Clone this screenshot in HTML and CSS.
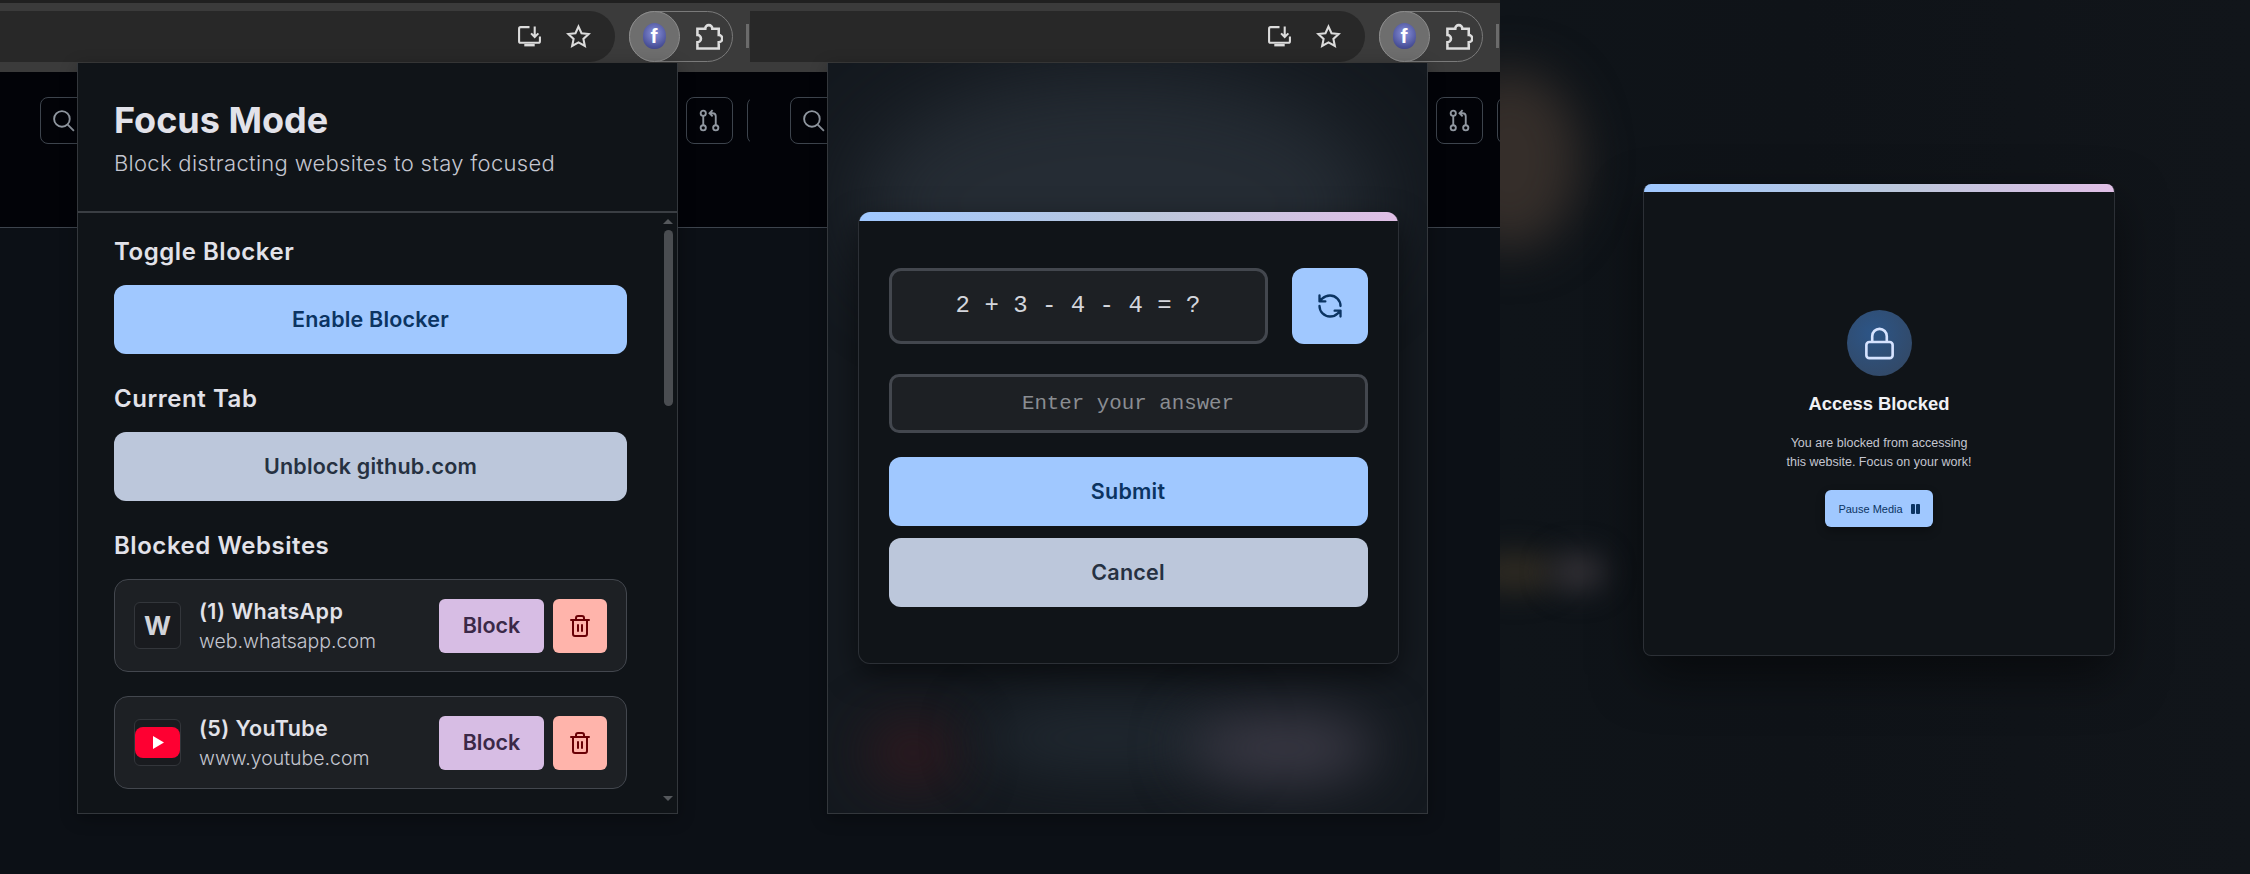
FILE: index.html
```html
<!DOCTYPE html>
<html lang="en">
<head>
  <meta charset="UTF-8">
  <meta name="viewport" content="width=device-width, initial-scale=1.0">
  <title>Focus Mode</title>
  <link rel="stylesheet" href="styles.css">
</head>
<body>

<div class="page">

  <!-- first shot: extension popup -->
  <section class="shot">
    <div class="toolbar">
      <div class="url-pill">
        <svg class="tool-icon" viewBox="0 0 24 24"><path d="M12 3H3.500a1.500 1.500 0 0 0-1.500 1.500v12a1.500 1.500 0 0 0 1.500 1.500h17a1.500 1.500 0 0 0 1.500-1.500V12"/><path class="stand" d="M7 19.200h10v2.300H7z"/><path d="M17 2.500v10M13.500 9l3.500 3.500L20.500 9"/></svg>
        <svg class="tool-icon" viewBox="0 0 24 24"><path d="M12 2.500l2.900 6.300 6.900.8-5.100 4.700 1.400 6.800-6.100-3.400-6.100 3.400 1.400-6.800-5.100-4.700 6.900-.8z"/></svg>
      </div>
      <div class="ext-pill">
        <div class="ext-active"><div class="ext-logo">f</div></div>
        <svg class="tool-icon puzzle" viewBox="2 3 19 19"><path d="M3 7h5.500a2.500 2.500 0 0 1 5 0H18v4.500a2.500 2.500 0 0 1 0 5V21H3v-4.500a2.500 2.500 0 0 0 0-5z"/></svg>
      </div>
      <div class="tool-divider"></div>
    </div>
    <div class="repo-bar">
      <div class="repo-btn search-btn">
        <svg viewBox="0 0 24 24"><circle cx="10.500" cy="10.500" r="7.500"/><path d="M16 16l6 6"/></svg>
      </div>
      <div class="repo-btn pr-btn">
        <svg viewBox="0 0 24 24"><circle cx="6" cy="5" r="2.500"/><circle cx="6" cy="19" r="2.500"/><circle cx="18" cy="19" r="2.500"/><path d="M6 7.500v9M18 16.500V8a3 3 0 0 0-3-3h-3M15 2l-3 3 3 3"/></svg>
      </div>
      <div class="repo-btn cut-btn"></div>
    </div>

    <div class="popup">
      <header class="popup-head">
        <h1>Focus Mode</h1>
        <p>Block distracting websites to stay focused</p>
      </header>
      <div class="popup-body">
        <div class="popup-content">
          <h2>Toggle Blocker</h2>
          <button class="btn btn-primary">Enable Blocker</button>
          <h2>Current Tab</h2>
          <button class="btn btn-secondary">Unblock github.com</button>
          <h2>Blocked Websites</h2>

          <div class="site">
            <div class="site-icon">W</div>
            <div class="site-text">
              <div class="site-name">(1) WhatsApp</div>
              <div class="site-url">web.whatsapp.com</div>
            </div>
            <button class="block-btn">Block</button>
            <button class="trash-btn">
              <svg viewBox="0 0 24 24"><path d="M3 6h18M19 6v14c0 1-1 2-2 2H7c-1 0-2-1-2-2V6M8 6V4c0-1 1-2 2-2h4c1 0 2 1 2 2v2M10 11v6M14 11v6"/></svg>
            </button>
          </div>

          <div class="site">
            <div class="site-icon">
              <svg viewBox="0 0 45 31"><rect width="45" height="31" rx="8" fill="#fe0032"/><path d="M18 9l11 6.500-11 6.500z" fill="#fff"/></svg>
            </div>
            <div class="site-text">
              <div class="site-name">(5) YouTube</div>
              <div class="site-url">www.youtube.com</div>
            </div>
            <button class="block-btn">Block</button>
            <button class="trash-btn">
              <svg viewBox="0 0 24 24"><path d="M3 6h18M19 6v14c0 1-1 2-2 2H7c-1 0-2-1-2-2V6M8 6V4c0-1 1-2 2-2h4c1 0 2 1 2 2v2M10 11v6M14 11v6"/></svg>
            </button>
          </div>
        </div>
        <div class="scrollbar">
          <div class="arrow-up"></div>
          <div class="thumb"></div>
          <div class="arrow-down"></div>
        </div>
      </div>
    </div>
  </section>

  <!-- second shot: math challenge -->
  <section class="shot">
    <div class="toolbar">
      <div class="url-pill">
        <svg class="tool-icon" viewBox="0 0 24 24"><path d="M12 3H3.500a1.500 1.500 0 0 0-1.500 1.500v12a1.500 1.500 0 0 0 1.500 1.500h17a1.500 1.500 0 0 0 1.500-1.500V12"/><path class="stand" d="M7 19.200h10v2.300H7z"/><path d="M17 2.500v10M13.500 9l3.500 3.500L20.500 9"/></svg>
        <svg class="tool-icon" viewBox="0 0 24 24"><path d="M12 2.500l2.900 6.300 6.900.8-5.100 4.700 1.400 6.800-6.100-3.400-6.100 3.400 1.400-6.800-5.100-4.700 6.900-.8z"/></svg>
      </div>
      <div class="ext-pill">
        <div class="ext-active"><div class="ext-logo">f</div></div>
        <svg class="tool-icon puzzle" viewBox="2 3 19 19"><path d="M3 7h5.500a2.500 2.500 0 0 1 5 0H18v4.500a2.500 2.500 0 0 1 0 5V21H3v-4.500a2.500 2.500 0 0 0 0-5z"/></svg>
      </div>
      <div class="tool-divider"></div>
    </div>
    <div class="repo-bar">
      <div class="repo-btn search-btn">
        <svg viewBox="0 0 24 24"><circle cx="10.500" cy="10.500" r="7.500"/><path d="M16 16l6 6"/></svg>
      </div>
      <div class="repo-btn pr-btn">
        <svg viewBox="0 0 24 24"><circle cx="6" cy="5" r="2.500"/><circle cx="6" cy="19" r="2.500"/><circle cx="18" cy="19" r="2.500"/><path d="M6 7.500v9M18 16.500V8a3 3 0 0 0-3-3h-3M15 2l-3 3 3 3"/></svg>
      </div>
      <div class="repo-btn cut-btn"></div>
    </div>

    <div class="popup popup-blur">
      <div class="blob blob-top"></div>
      <div class="blob blob-red"></div>
      <div class="blob blob-mid"></div>
      <div class="blob blob-grey"></div>
      <div class="modal">
        <div class="rainbow"></div>
        <div class="modal-body">
          <div class="captcha-row">
            <div class="captcha">2 + 3 - 4 - 4 = ?</div>
            <button class="refresh-btn">
              <svg viewBox="0 0 24 24"><path d="M21 12a9 9 0 0 0-9-9 9.750 9.750 0 0 0-6.740 2.740L3 8M3 3v5h5M3 12a9 9 0 0 0 9 9 9.750 9.750 0 0 0 6.740-2.740L21 16M16 16h5v5"/></svg>
            </button>
          </div>
          <input class="answer" type="text" placeholder="Enter your answer">
          <button class="btn btn-primary">Submit</button>
          <button class="btn btn-secondary">Cancel</button>
        </div>
      </div>
    </div>
  </section>

  <!-- third shot: blocked page -->
  <section class="shot shot-blocked">
    <div class="blob blob-brown"></div>
    <div class="blob blob-tan"></div>
    <div class="blob blob-tan-grey"></div>
    <div class="blocked-card">
      <div class="rainbow rainbow-thin"></div>
      <div class="lock-circle">
        <svg viewBox="0 0 24 24"><rect x="3" y="11" width="18" height="11" rx="2"/><path d="M7 11V7a5 5 0 0 1 10 0v4"/></svg>
      </div>
      <h3>Access Blocked</h3>
      <p>You are blocked from accessing<br>this website. Focus on your work!</p>
      <button class="pause-btn">Pause Media <span class="pause-icon"><i></i><i></i></span></button>
    </div>
  </section>

</div>

</body>
</html>
```

FILE: styles.css
```css
* { box-sizing: border-box; }

body { margin: 0; background: #0d1117; overflow: hidden; font-family: Inter, "Noto Sans", sans-serif; }

button { font-family: inherit; border: none; cursor: pointer; padding: 0; }

.page { display: flex; width: 2250px; height: 874px; }

.shot { position: relative; width: 750px; height: 874px; background: #0c1016; overflow: hidden; }

/* browser toolbar */
.toolbar { display: flex; align-items: center; height: 72px; background: #3b3b3b; border-top: 3px solid #202020; padding-bottom: 3px; }
.url-pill { display: flex; align-items: center; justify-content: flex-end; gap: 24px; width: 615px; height: 51px; padding-right: 24px; background: #282828; border-radius: 0 26px 26px 0; }
.tool-icon { width: 25px; height: 25px; fill: none; stroke: #dcdcdc; stroke-width: 2; }
.tool-icon .stand { fill: #dcdcdc; stroke: none; }
.ext-pill { display: flex; align-items: center; width: 104px; height: 51px; margin-left: 14px; border: 1.500px solid #7a7a7a; border-radius: 26px; }
.ext-pill .tool-icon { margin-left: 16px; }
.ext-pill .puzzle { width: 27px; height: 27px; stroke-width: 1.800; }
.ext-active { display: flex; align-items: center; justify-content: center; width: 51px; height: 51px; margin: -1.500px 0 -1.500px -1.500px; background: #6e6e6e; border: 1.500px solid #8d8d8d; border-radius: 50%; }
.ext-logo { width: 23px; height: 26px; background: radial-gradient(circle at 50% 40%, #8b93dd, #4a5199 70%, #3a3a70); border-radius: 50% 50% 45% 45%; color: #fff; font: bold 21px/26px "Liberation Sans", sans-serif; text-align: center; }
.tool-divider { width: 3px; height: 24px; margin-left: 13px; background: #6b6b6b; }

/* page header behind the popup */
.repo-bar { display: flex; height: 156px; padding: 25px 0 0 40px; background: #020308; border-bottom: 1px solid #3d444d; }
.repo-btn { display: flex; align-items: center; justify-content: center; width: 47px; height: 47px; border: 1.500px solid #3d444d; border-radius: 8px; flex: none; }
.repo-btn svg { width: 25px; height: 25px; fill: none; stroke: #9198a1; stroke-width: 1.800; }
.search-btn { justify-content: flex-start; padding-left: 10px; width: 80px; }
.pr-btn { margin-left: 566px; }
.cut-btn { margin-left: 14px; }

/* popup */
.popup { position: absolute; top: 63px; left: 77px; width: 601px; height: 751px; background: #101418; border: 1px solid #33373c; border-top: none; box-shadow: 0 4px 16px rgba(0, 0, 0, 0.3); color: #e2e2e9; }
.popup-head { height: 150px; padding: 36px 0 0 36px; border-bottom: 2px solid #3a3e43; }
.popup-head h1 { margin: 0; font-size: 36px; line-height: 42px; font-weight: 700; letter-spacing: 0; }
.popup-head p { margin: 5px 0 0; font-size: 22px; line-height: 34px; font-weight: 300; color: #c4c6d0; letter-spacing: 0.300px; }

.popup-body { display: flex; height: 600px; overflow: hidden; }
.popup-content { width: 513px; margin-left: 36px; padding-top: 24px; }
.popup-content h2 { margin: 0 0 18px; font-size: 24px; line-height: 30px; font-weight: 600; letter-spacing: 0.550px; }
.popup-content .btn { margin-bottom: 30px; }

.scrollbar { display: flex; flex-direction: column; align-items: center; width: 12px; margin-left: auto; margin-right: 3px; padding-top: 6px; }
.arrow-up { width: 0; height: 0; border: 5px solid transparent; border-top: none; border-bottom: 5px solid #55585c; }
.thumb { width: 9px; height: 176px; margin-top: 6px; background: #4a4d51; border-radius: 5px; }
.arrow-down { width: 0; height: 0; margin-top: 390px; border: 5px solid transparent; border-bottom: none; border-top: 5px solid #55585c; }

.btn { display: block; width: 100%; height: 69px; padding-bottom: 2px; border-radius: 12px; font-size: 21.500px; font-weight: 600; letter-spacing: 0.200px; }
.btn-primary { background: #a0c8ff; color: #0b3462; }
.btn-secondary { background: #bcc7db; color: #263141; }

.site { display: flex; align-items: center; height: 93px; margin-bottom: 24px; padding: 0 19px; background: #1d2024; border: 1.500px solid #43474e; border-radius: 14px; }
.site-icon { display: flex; align-items: center; justify-content: center; width: 47px; height: 47px; background: #191b1f; border: 1.500px solid #33363b; border-radius: 6px; font-size: 26px; font-weight: 700; color: #d2d4da; flex: none; }
.site-icon svg { width: 45px; height: 31px; }
.site-text { flex: 1; margin-left: 18px; }
.site-name { font-size: 21.500px; line-height: 30px; font-weight: 600; letter-spacing: 0.350px; }
.site-url { font-size: 19.500px; line-height: 30px; font-weight: 300; color: #c4c6d0; }
.block-btn { width: 105px; height: 54px; padding-bottom: 2px; background: #d7bde4; color: #3b2948; border-radius: 6px; font-size: 21.500px; font-weight: 600; }
.trash-btn { display: flex; align-items: center; justify-content: center; width: 54px; height: 54px; margin-left: 9px; background: #ffb4ab; border-radius: 6px; }
.trash-btn svg { width: 24px; height: 24px; fill: none; stroke: #690005; stroke-width: 2; stroke-linecap: round; stroke-linejoin: round; }

/* blurred layers */
.blob { position: absolute; border-radius: 50%; filter: blur(28px); }
.popup-blur { display: flex; align-items: center; justify-content: center; background: #14191f; overflow: hidden; }
.blob-top { top: 10px; left: 30px; width: 520px; height: 260px; background: #252c34; filter: blur(40px); }
.blob-mid { top: 640px; left: 150px; width: 260px; height: 70px; background: #202830; }
.blob-red { top: 660px; left: 40px; width: 90px; height: 60px; background: #33191f; }
.blob-grey { top: 650px; left: 360px; width: 190px; height: 70px; background: #3b3a46; }

.modal { position: relative; display: flex; flex-direction: column; width: 541px; height: 452px; margin-left: 1px; background: #101418; border: 1.500px solid #2c3036; border-top: none; border-radius: 12px; box-shadow: 0 10px 30px rgba(0, 0, 0, 0.5); overflow: hidden; }
.rainbow { height: 9px; background: linear-gradient(90deg, #a0c8ff, #bcc7db 55%, #e0bfe6); flex: none; }
.rainbow-thin { height: 8px; }
.modal-body { display: flex; flex-direction: column; padding: 47px 30px 0; }
.captcha-row { display: flex; gap: 24px; margin-bottom: 30px; }
.captcha { flex: 1; height: 76px; background: #1d2024; border: 3px solid #43474e; border-radius: 12px; font: 24px/70px "Liberation Mono", monospace; color: #d4d6dc; text-align: center; }
.refresh-btn { display: flex; align-items: center; justify-content: center; width: 76px; height: 76px; background: #a0c8ff; border-radius: 12px; }
.refresh-btn svg { width: 28px; height: 28px; fill: none; stroke: #0b3462; stroke-width: 2; stroke-linecap: round; stroke-linejoin: round; }
.answer { width: 100%; height: 59px; margin-bottom: 24px; background: #1d2024; border: 3px solid #43474e; border-radius: 10px; font: 20.800px "Liberation Mono", monospace; color: #e2e2e9; text-align: center; outline: none; }
.answer::placeholder { color: #8a8d92; opacity: 1; }
.modal-body .btn { margin-bottom: 12px; flex: none; }

/* blocked page */
.shot-blocked { background: linear-gradient(90deg, #0f1419, #0f1318 40%, #11151a); }
.blob-brown { top: 70px; left: -60px; width: 140px; height: 180px; background: #352e2a; filter: blur(24px); }
.blob-tan { top: 552px; left: -30px; width: 90px; height: 40px; background: #2e2a22; filter: blur(14px); }
.blob-tan-grey { top: 552px; left: 50px; width: 56px; height: 40px; background: #312f34; filter: blur(14px); }
.blocked-card { position: relative; display: flex; flex-direction: column; align-items: center; width: 472px; height: 472px; margin: 184px 0 0 143px; background: #101418; border: 1px solid #2c3036; border-top: none; border-radius: 8px; box-shadow: 0 20px 50px rgba(0, 0, 0, 0.5); overflow: hidden; font-family: "Liberation Sans", Arial, sans-serif; }
.blocked-card .rainbow { width: 100%; }
.lock-circle { display: flex; align-items: center; justify-content: center; width: 65px; height: 66px; margin-top: 118px; background: radial-gradient(circle at 40% 35%, #2c5587, #34465f); border-radius: 50%; flex: none; }
.lock-circle svg { width: 35px; height: 35px; fill: none; stroke: #d6e3ff; stroke-width: 1.800; }
.blocked-card h3 { margin: 16px 0 0; font-size: 18.400px; line-height: 24px; font-weight: 700; color: #f0f1f5; }
.blocked-card p { margin: 18px 0 0; font-size: 12.500px; line-height: 19px; color: #c4c6d0; text-align: center; }
.pause-btn { display: flex; align-items: center; justify-content: center; gap: 8px; width: 108px; height: 37px; margin-top: 18px; background: #a0c8ff; color: #0b3462; border-radius: 6px; font-family: inherit; font-size: 11px; box-shadow: 0 4px 10px rgba(0, 0, 0, 0.3); }
.pause-icon { display: flex; gap: 1px; }
.pause-icon i { width: 4px; height: 10px; background: #0b3462; border-radius: 1px; }
```
